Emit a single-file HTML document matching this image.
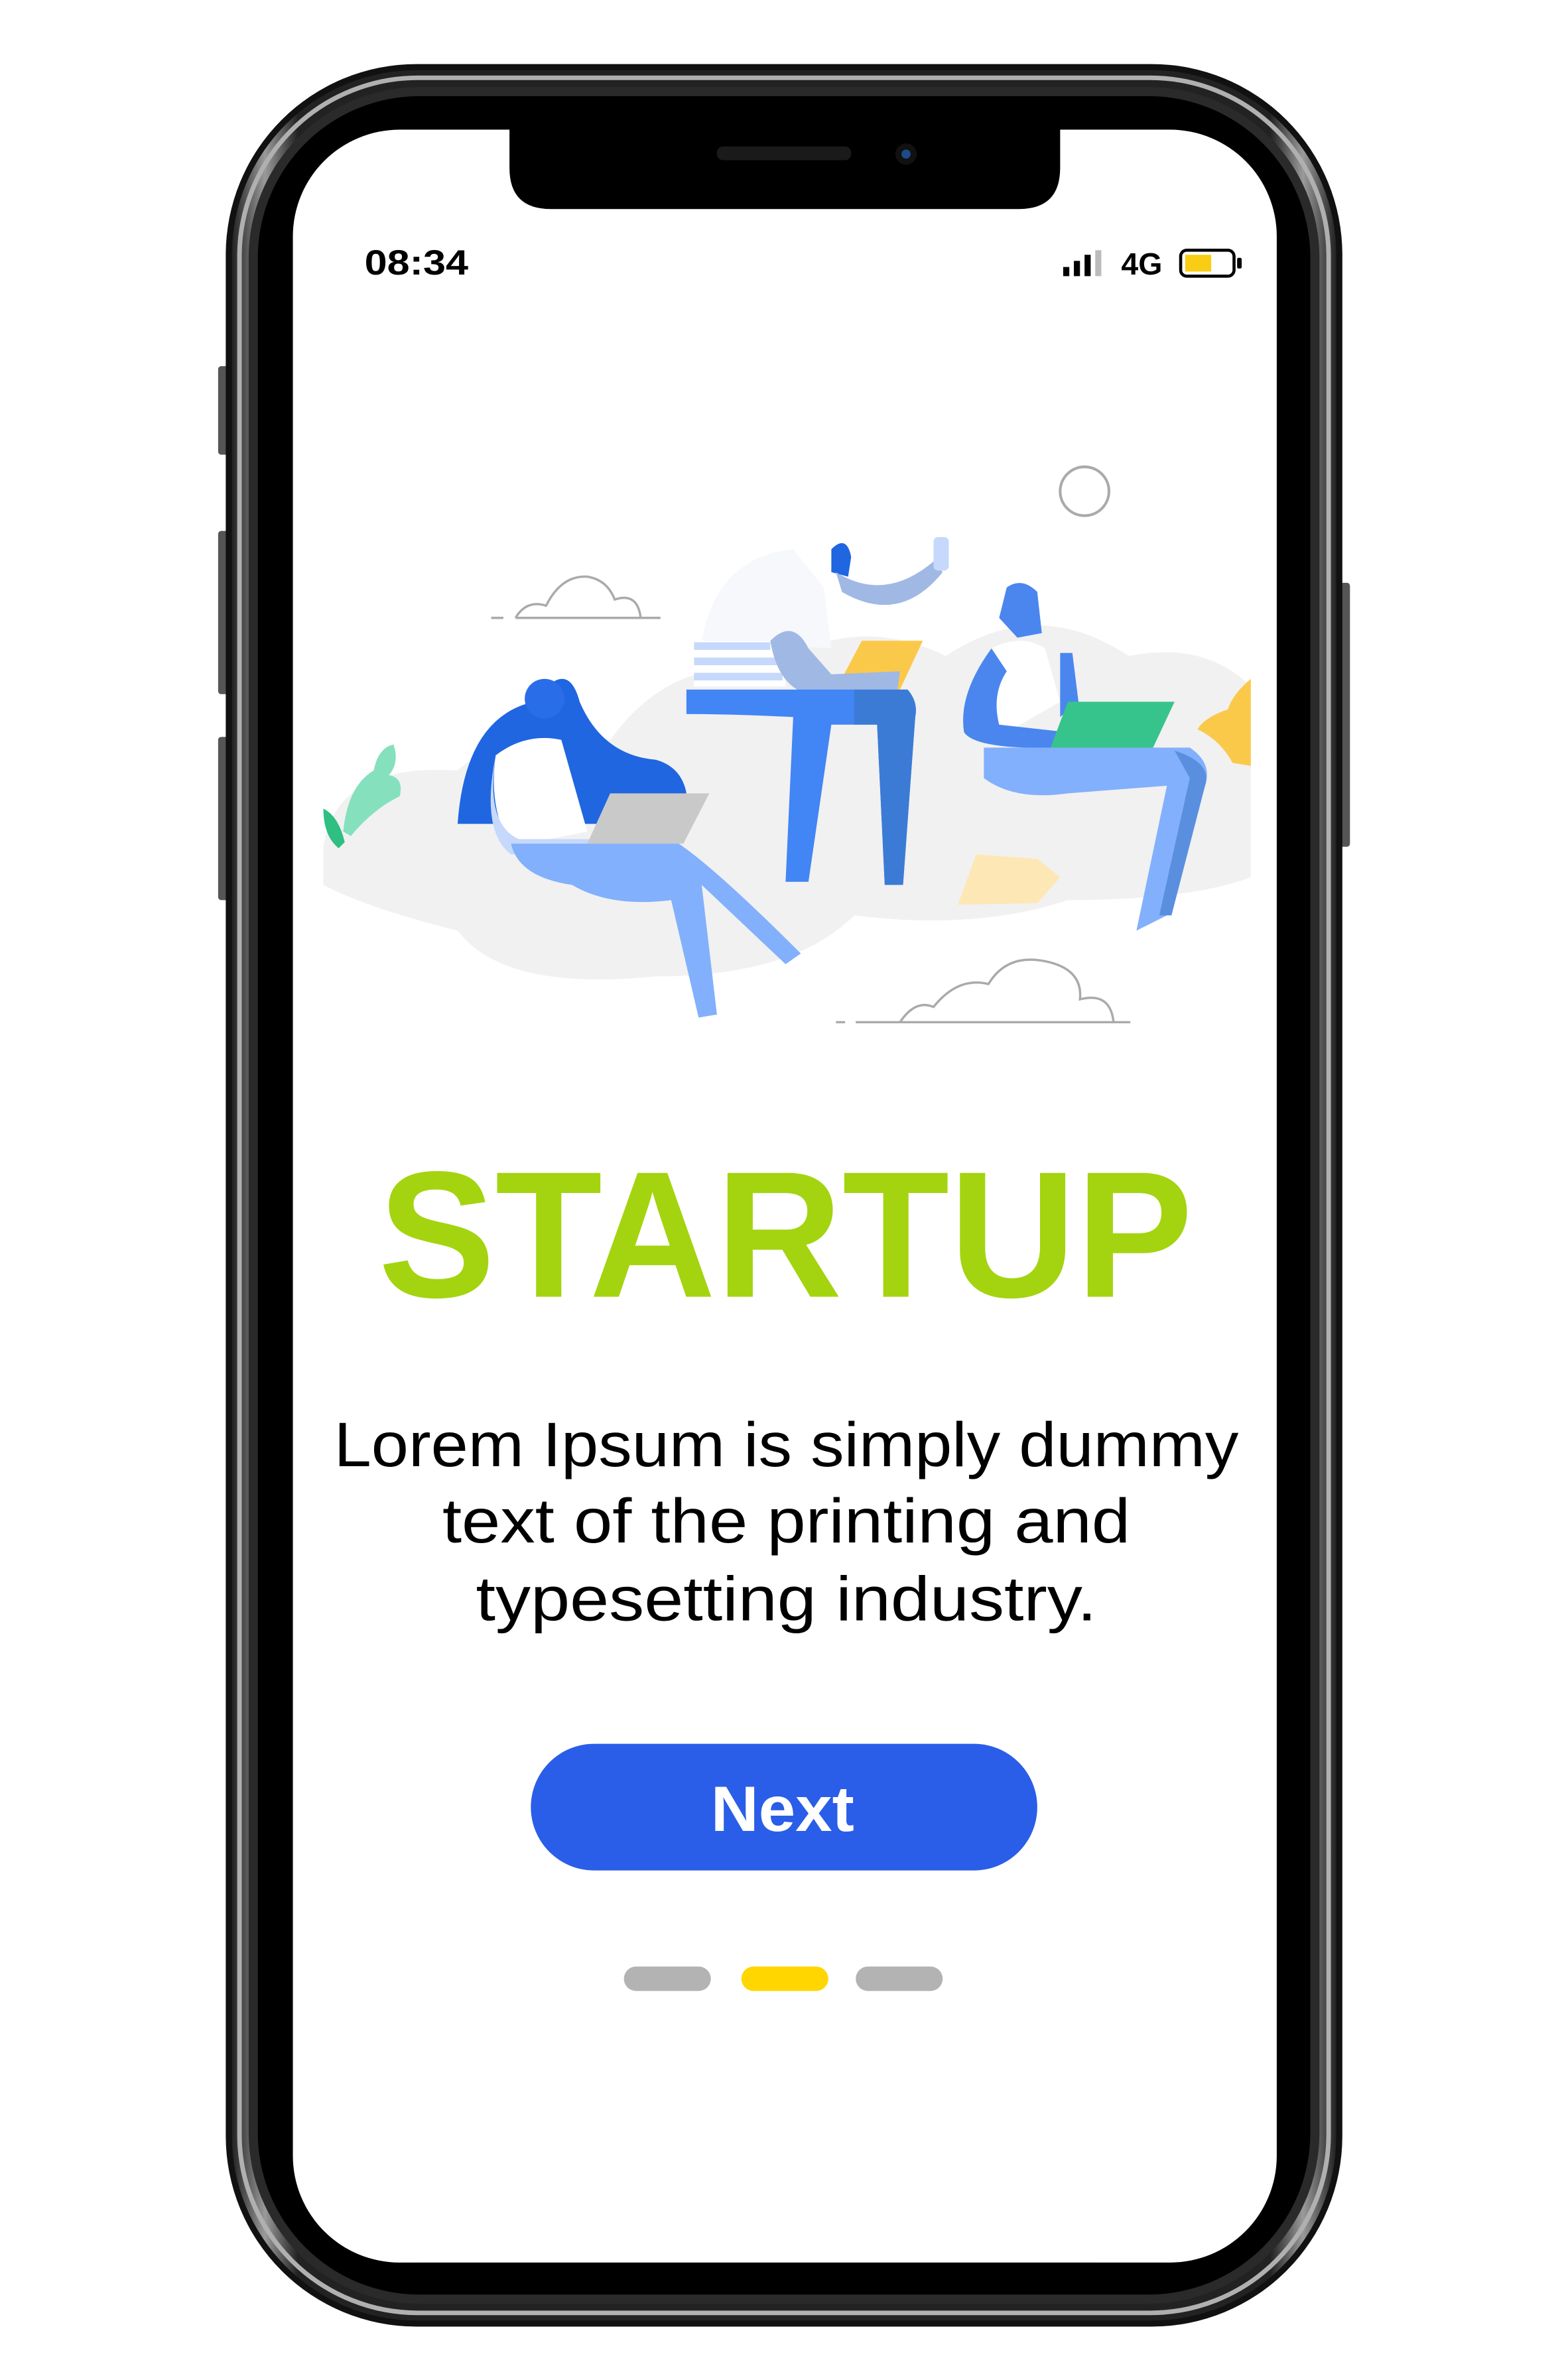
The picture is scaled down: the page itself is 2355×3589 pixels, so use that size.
<!DOCTYPE html>
<html><head><meta charset="utf-8"><style>
html,body{margin:0;padding:0;background:#fff;}
svg{display:block;}
</style></head><body>
<svg width="2355" height="3589" viewBox="0 0 1024 1560" preserveAspectRatio="none" xmlns="http://www.w3.org/2000/svg">
<defs>
<linearGradient id="rim" x1="0" y1="0" x2="1" y2="0">
<stop offset="0" stop-color="#222"/><stop offset="0.03" stop-color="#9a9a9a"/><stop offset="0.06" stop-color="#222"/><stop offset="0.94" stop-color="#222"/><stop offset="0.97" stop-color="#9a9a9a"/><stop offset="1" stop-color="#222"/>
</linearGradient>
</defs>
<rect x="143" y="240" width="8" height="58" rx="2" fill="#555"/>
<rect x="143" y="348" width="8" height="107" rx="2" fill="#555"/>
<rect x="143" y="483" width="8" height="107" rx="2" fill="#555"/>
<rect x="877" y="382" width="8" height="173" rx="2" fill="#555"/>
<rect x="148" y="42" width="732" height="1483" rx="125" fill="#111"/>
<rect x="152" y="46" width="724" height="1475" rx="121" fill="url(#rim)"/>
<rect x="157" y="51" width="714" height="1465" rx="117" fill="none" stroke="#b0b0b0" stroke-width="3"/>
<rect x="163" y="57" width="702" height="1453" rx="112" fill="#2a2a2a"/>
<rect x="169" y="63" width="690" height="1441" rx="106" fill="#000"/>
<rect x="192" y="85" width="645" height="1398" rx="70" fill="#fff"/>
<path d="M334 85 H695 V110 Q695 137 668 137 H361 Q334 137 334 110 Z" fill="#000"/>
<rect x="470" y="96" width="88" height="9" rx="4" fill="#1a1a1a"/>
<circle cx="594" cy="101" r="7" fill="#111"/><circle cx="594" cy="101" r="3" fill="#1d4b8a"/>
<text x="239" y="180" font-family="Liberation Sans, sans-serif" font-weight="bold" font-size="23" fill="#000" textLength="68" lengthAdjust="spacingAndGlyphs">08:34</text>
<rect x="697" y="175" width="4" height="6" fill="#000"/>
<rect x="704" y="171" width="4" height="10" fill="#000"/>
<rect x="711" y="167" width="4" height="14" fill="#000"/>
<rect x="718" y="164" width="4" height="17" fill="#bbb"/>
<text x="735" y="180" font-family="Liberation Sans, sans-serif" font-weight="bold" font-size="20" fill="#000" textLength="27" lengthAdjust="spacingAndGlyphs">4G</text>
<rect x="774" y="164" width="35" height="17" rx="4" fill="#fff" stroke="#000" stroke-width="2"/>
<rect x="777" y="167" width="17" height="11" fill="#f8cd13"/>
<rect x="811" y="169" width="3" height="7" rx="1" fill="#000"/>
<g>
<path d="M212 555 Q220 500 300 505 Q340 470 400 485 Q440 430 500 440 Q560 400 620 430 Q680 390 740 430 Q790 420 820 450 V575 Q780 590 700 590 Q640 610 560 600 Q520 640 430 640 Q330 650 300 610 Q240 595 212 580 Z" fill="#f1f1f1"/>
<path d="M322 405 H330 M338 405 Q345 393 358 397 Q368 377 385 378 Q398 380 403 393 Q418 388 420 405 M338 405 H433" fill="none" stroke="#aaa" stroke-width="1.5"/>
<path d="M548 670 H554 M561 670 H741 M590 670 Q600 655 612 660 Q628 640 648 645 Q660 625 685 630 Q710 635 708 655 Q728 650 730 670" fill="none" stroke="#aaa" stroke-width="1.5"/>
<circle cx="711" cy="322" r="16" fill="none" stroke="#aaa" stroke-width="1.8"/>
<path d="M225 545 Q228 515 245 505 Q248 490 258 488 Q262 500 255 508 Q265 510 262 522 Q245 530 230 548 Z" fill="#85e0be"/>
<path d="M212 530 Q222 535 226 552 L222 556 Q212 548 212 530 Z" fill="#2fbf80"/>
<path d="M820 445 Q808 455 805 465 Q790 470 785 478 Q800 485 808 500 L820 502 Z" fill="#fbc94a"/>
<path d="M640 560 L680 563 L695 575 L680 592 L628 593 Z" fill="#fde7b4"/>
<path d="M300 540 Q305 470 350 460 Q372 430 380 460 Q395 495 430 498 Q455 505 450 540 Z" fill="#1f66e0"/>
<circle cx="357" cy="458" r="13" fill="#2a6de8"/>
<path d="M325 495 Q345 480 368 485 L385 545 L335 555 Q320 530 325 495 Z" fill="#fff"/>
<path d="M325 495 Q318 540 340 550 L390 550 L388 560 L335 560 Q315 545 325 495 Z" fill="#c6d8fb"/>
<path d="M400 520 L465 520 L448 553 L385 553 Z" fill="#c9c9c9"/>
<path d="M335 553 L445 553 Q470 570 525 625 L515 632 L460 580 L470 665 L458 667 L440 590 Q400 595 375 580 Q340 575 335 553 Z" fill="#82b0fc"/>
<path d="M460 420 Q470 365 520 360 L540 385 L545 425 Z" fill="#f6f8fc"/>
<rect x="455" y="420" width="60" height="30" fill="#fff"/>
<g fill="#c6d8fb"><rect x="455" y="421" width="50" height="5"/><rect x="455" y="431" width="55" height="5"/><rect x="455" y="441" width="58" height="5"/></g>
<path d="M545 360 Q555 350 558 365 L556 378 L545 375 Z" fill="#1f66e0"/>
<path d="M548 375 Q580 395 612 368 L618 375 Q590 410 552 388 Z" fill="#a0b8e4"/>
<rect x="612" y="352" width="10" height="22" rx="3" fill="#c6d8fb"/>
<path d="M565 420 L605 420 L590 452 L548 452 Z" fill="#fbc94a"/>
<path d="M505 420 Q520 405 530 425 L545 442 L590 440 L588 455 L530 455 Q510 450 505 420 Z" fill="#a0b8e4"/>
<path d="M450 452 H595 Q602 460 600 470 L592 580 L580 580 L575 475 H545 L530 578 L515 578 L520 470 Q480 468 450 468 Z" fill="#4285f4"/>
<path d="M560 452 H595 Q602 460 600 470 L592 580 L580 580 L575 475 H560 Z" fill="#3b7bd6"/>
<path d="M660 385 Q670 378 680 388 L683 415 L667 418 L655 405 Z" fill="#4a86ee"/>
<path d="M650 425 Q670 415 685 425 L695 460 L660 480 Q645 470 650 425 Z" fill="#fff"/>
<path d="M650 425 Q628 455 632 480 Q640 492 700 490 L700 480 L655 475 Q650 455 660 440 Z" fill="#4a86ee"/>
<path d="M695 428 L703 428 L707 460 L695 470 Z" fill="#4a86ee"/>
<path d="M700 460 L770 460 L755 492 L688 492 Z" fill="#37c48c"/>
<path d="M645 490 L780 490 Q795 500 790 515 L765 600 L745 610 L765 515 L700 520 Q665 525 645 510 Z" fill="#82b0fc"/>
<path d="M770 492 Q795 500 790 515 L768 600 L760 600 L780 510 Z" fill="#5a8fe0"/>
</g>
<text x="248" y="850" font-family="Liberation Sans, sans-serif" font-weight="bold" font-size="118" fill="#a3d40f" textLength="534" lengthAdjust="spacingAndGlyphs">STARTUP</text>
<g font-family="Liberation Sans, sans-serif" font-size="41" fill="#000">
<text x="219" y="961" textLength="593" lengthAdjust="spacingAndGlyphs">Lorem Ipsum is simply dummy</text>
<text x="290" y="1011" textLength="451" lengthAdjust="spacingAndGlyphs">text of the printing and</text>
<text x="312" y="1062" textLength="407" lengthAdjust="spacingAndGlyphs">typesetting industry.</text>
</g>
<rect x="348" y="1143" width="332" height="83" rx="41.5" fill="#2a5ee8"/>
<text x="466" y="1200" font-family="Liberation Sans, sans-serif" font-weight="bold" font-size="42" fill="#fff" textLength="94" lengthAdjust="spacingAndGlyphs">Next</text>
<rect x="409" y="1289" width="57" height="16" rx="8" fill="#b3b3b3"/>
<rect x="486" y="1289" width="57" height="16" rx="8" fill="#ffd600"/>
<rect x="561" y="1289" width="57" height="16" rx="8" fill="#b3b3b3"/>
</svg>
</body></html>
